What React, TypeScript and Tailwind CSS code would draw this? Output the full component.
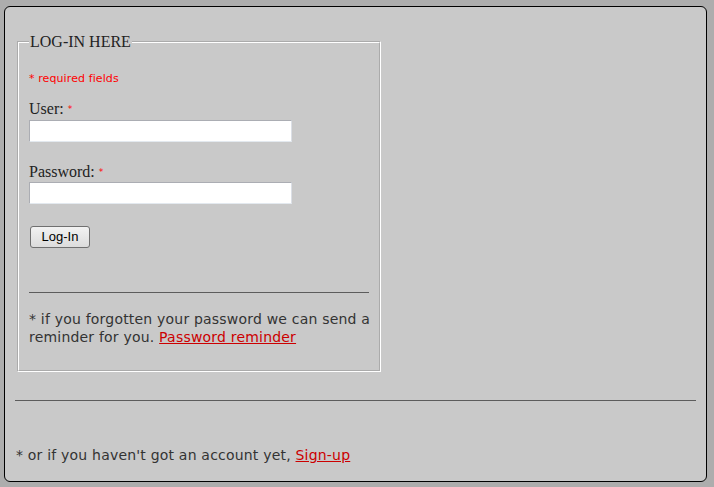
import React from 'react';

const body = { fontFamily: '"DejaVu Sans", Verdana, sans-serif' };
const serif = { fontFamily: '"Liberation Serif", "Times New Roman", serif' };

const App: React.FC = () => {
  return (
    <div className="w-[714px] h-[487px] bg-[#adadad] pt-[6px] pl-[4px] overflow-hidden">
      <div
        className="w-[703px] h-[476px] bg-[#c9c9c9] border border-black rounded-[6px] px-[10px] pt-[26px] text-[#333] text-[14px] leading-[18px] tracking-[0.2px]"
        style={body}
      >
        {/* Log-in box */}
        <fieldset className="ml-[2px] w-[364px] min-w-0 border-2 border-white [border-style:groove] px-[10px] pb-[24px]">
          <legend className="px-[1px] text-[16px] leading-[18px] tracking-normal text-[#222]" style={serif}>
            LOG-IN HERE
          </legend>

          <p className="mt-[21px] text-[11px] leading-[13px] tracking-[0.1px] text-[#ff0000]">* required fields</p>

          <form onSubmit={(e) => e.preventDefault()}>
            <label className="block mt-[15px] text-[16px] leading-[18px] tracking-normal text-[#222]" style={serif}>
              User: <span className="text-[9px] text-[#ff0000] align-top" style={body}>*</span>
            </label>
            <input
              type="text"
              className="block mt-[2px] w-[263px] h-[22px] bg-white border border-[#abadb3] border-r-[#dbdfe6] border-b-[#e3e9ef] outline-none"
            />

            <label className="block mt-[21px] text-[16px] leading-[18px] tracking-normal text-[#222]" style={serif}>
              Password: <span className="text-[9px] text-[#ff0000] align-top" style={body}>*</span>
            </label>
            <input
              type="password"
              className="block mt-[1px] w-[263px] h-[22px] bg-white border border-[#abadb3] border-r-[#dbdfe6] border-b-[#e3e9ef] outline-none"
            />

            <button
              type="submit"
              className="block mt-[22px] ml-[1px] w-[60px] h-[22px] rounded-[3px] border border-[#707070] bg-gradient-to-b from-[#f2f2f2] to-[#dcdcdc] text-[13px] tracking-normal text-black"
              style={{ fontFamily: '"Liberation Sans", Arial, sans-serif' }}
            >
              Log-In
            </button>
          </form>

          <hr className="mt-[44px] border-t border-[#5c5c5c]" />

          <p className="mt-[17px] whitespace-nowrap">
            * if you forgotten your password we can send a<br />
            reminder for you.{' '}
            <a href="#" className="text-[#cc0000] underline">
              Password reminder
            </a>
          </p>
        </fieldset>

        <hr className="mt-[28px] border-t border-[#5c5c5c]" />

        <p className="mt-[45px] ml-px">
          * or if you haven't got an account yet,{' '}
          <a href="#" className="text-[#cc0000] underline">
            Sign-up
          </a>
        </p>
      </div>
    </div>
  );
};

export default App;
